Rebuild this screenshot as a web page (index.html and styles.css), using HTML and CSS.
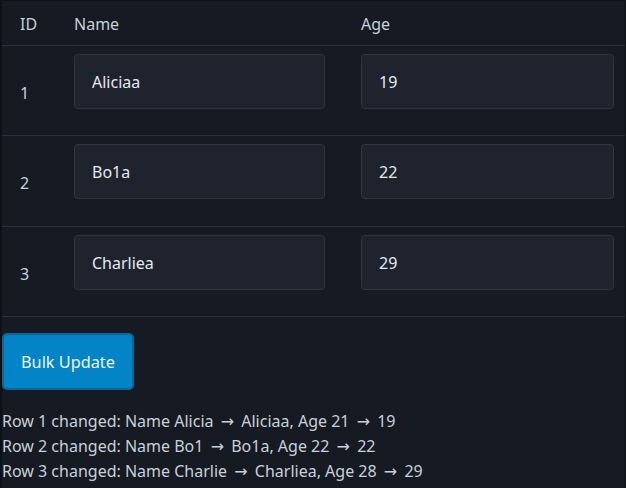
FILE: index.html
```html
<!DOCTYPE html>
<html>
<head>
<meta charset="utf-8">
<link rel="stylesheet" href="styles.css">
</head>
<body>
<div class="app">
  <div class="grid">
    <div class="cell head id">ID</div>
    <div class="cell head">Name</div>
    <div class="cell head last">Age</div>

    <div class="cell row id">1</div>
    <div class="cell row"><input class="field" value="Aliciaa"></div>
    <div class="cell row last"><input class="field" value="19"></div>

    <div class="cell row id tall">2</div>
    <div class="cell row tall"><input class="field" value="Bo1a"></div>
    <div class="cell row last tall"><input class="field" value="22"></div>

    <div class="cell row id">3</div>
    <div class="cell row"><input class="field" value="Charliea"></div>
    <div class="cell row last"><input class="field" value="29"></div>
  </div>
  <button class="btn">Bulk Update</button>
  <div class="log">
    <div>Row 1 changed: Name Alicia <span class="arrow">→</span> Aliciaa, Age 21 <span class="arrow">→</span> 19</div>
    <div>Row 2 changed: Name Bo1 <span class="arrow">→</span> Bo1a, Age 22 <span class="arrow">→</span> 22</div>
    <div>Row 3 changed: Name Charlie <span class="arrow">→</span> Charliea, Age 28 <span class="arrow">→</span> 29</div>
  </div>
</div>
</body>
</html>
```
FILE: styles.css
```css
html, body {
  margin: 0;
  padding: 0;
  background: #0d1015;
  height: 100%;
}
body {
  font-family: "Noto Sans", "Open Sans", sans-serif;
  font-size: 16px;
  color: #c9d1d9;
}
.app {
  margin: 1px 1px 0 2px;
  background: #161a22;
  height: calc(100% - 1px);
  overflow: hidden;
}
.grid {
  display: grid;
  grid-template-columns: 54px 287px 1fr;
}
.cell {
  padding: 0 18px;
  border-bottom: 1px solid #2a2f39;
}
.cell.last {
  padding-right: 11px;
}
.head {
  display: flex;
  align-items: center;
  padding-top: 2px;
  box-sizing: border-box;
  height: 45px;
}
.row {
  height: 90px;
  padding-top: 8px;
  box-sizing: border-box;
}
.row.tall {
  height: 91px;
}
.row.id {
  display: flex;
  align-items: center;
  padding-top: 4px;
}
.field {
  display: block;
  box-sizing: border-box;
  width: 100%;
  height: 55px;
  margin: 0;
  padding: 0 17px;
  background: #1f232e;
  border: 1px solid #30353f;
  border-radius: 4px;
  color: #e6e9ee;
  font: inherit;
  font-size: 16px;
  outline: none;
}
.btn {
  display: block;
  margin-top: 16px;
  height: 57px;
  padding: 0 17px;
  background: #0284c7;
  border: 2px solid #0a6797;
  border-radius: 5px;
  color: #eef6fb;
  font: inherit;
  font-size: 16.3px;
}
.log {
  margin-top: 19px;
  line-height: 25px;
  color: #c9d1d9;
}
.arrow {
  font-family: "DejaVu Sans", sans-serif;
  font-size: 16px;
  margin: 0 3px;
}
```
